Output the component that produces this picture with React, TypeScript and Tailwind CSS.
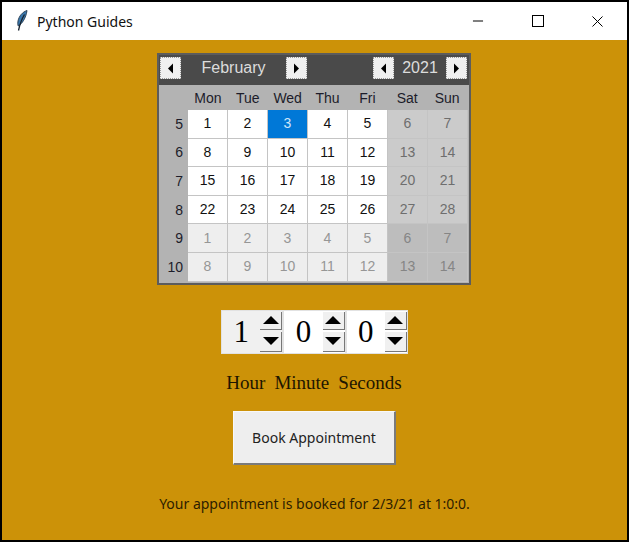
import { Minus, X } from "lucide-react";

const arial = "font-['Liberation_Sans',Arial,sans-serif]";
const serif = "font-['Liberation_Serif','Times_New_Roman',serif]";
const ui = "font-['Noto_Sans','Open_Sans',sans-serif]";

const dayNames = ["Mon", "Tue", "Wed", "Thu", "Fri", "Sat", "Sun"];

const weeks = [
  { n: 5, days: [1, 2, 3, 4, 5, 6, 7] },
  { n: 6, days: [8, 9, 10, 11, 12, 13, 14] },
  { n: 7, days: [15, 16, 17, 18, 19, 20, 21] },
  { n: 8, days: [22, 23, 24, 25, 26, 27, 28] },
  { n: 9, days: [1, 2, 3, 4, 5, 6, 7] },
  { n: 10, days: [8, 9, 10, 11, 12, 13, 14] },
];

const ArrowButton = ({ dir }: { dir: "left" | "right" }) => (
  <div className="flex h-[22px] w-[21px] items-center justify-center border border-dotted border-[#9a9a9a] bg-[#f0f0f0]">
    <svg width="7" height="11" viewBox="0 0 7 11">
      <path d={dir === "left" ? "M6 0.5V10.5L1 5.5Z" : "M1 0.5V10.5L6 5.5Z"} fill="#000" />
    </svg>
  </div>
);

const Spinner = ({ value, dim }: { value: string; dim?: boolean }) => (
  <div className={`flex h-[44px] w-[62.33px] items-center border border-[#e2e2e2] ${dim ? "bg-[#f0f0f0]" : "bg-white"}`}>
    <span className={`${serif} flex-1 text-center text-[31px] leading-none text-black`}>{value}</span>
    <div className="flex w-[22px] flex-col gap-[2px]">
      <div className="flex h-[18px] items-center justify-center border-b border-r border-[#777] bg-[#f0f0f0]">
        <svg width="16" height="8" viewBox="0 0 16 8"><path d="M8 0L16 8H0Z" fill="#000" /></svg>
      </div>
      <div className="flex h-[20px] items-center justify-center border-b border-r border-[#777] bg-[#f0f0f0]">
        <svg width="16" height="8" viewBox="0 0 16 8"><path d="M0 0H16L8 8Z" fill="#000" /></svg>
      </div>
    </div>
  </div>
);

const dayCellClass = (week: number, col: number, day: number) => {
  if (week === 0 && day === 3) return "bg-[#0078d7] text-[#cfe6fa]";
  const weekend = col >= 5;
  if (week >= 4) return weekend ? "bg-[#bdbdbd] text-[#858585]" : "bg-[#eeeeee] text-[#969696]";
  return weekend ? "bg-[#cbcbcb] text-[#6e6e6e]" : "bg-white text-[#111]";
};

const Calendar = () => (
  <div className={`${arial} mr-[1px] w-[314px] border-[2px] border-[#5c5c5c] bg-[#b3b3b3] text-[14px]`}>
    <div className="flex h-[30px] items-center bg-[#4a4a4a] pb-[4px] pl-[1px] pr-[2px] text-[#dcdcdc]">
      <ArrowButton dir="left" />
      <span className="w-[105px] text-center text-[16px]">February</span>
      <ArrowButton dir="right" />
      <div className="flex-1" />
      <ArrowButton dir="left" />
      <span className="w-[52px] text-center text-[16px]">2021</span>
      <ArrowButton dir="right" />
    </div>
    <div className="flex h-[25px] items-center pl-[29px] pr-[2px] text-[#1c1c2a]">
      {dayNames.map((d) => (
        <span key={d} className="w-[40px] pt-[1px] text-center">{d}</span>
      ))}
    </div>
    <div className="grid grid-cols-[29px_repeat(7,40px)] grid-rows-[repeat(6,28.6px)] pb-[1px] pr-[2px]">
      {weeks.map((w, i) => (
        <div key={w.n} className="contents">
          <span className="flex items-center justify-end pr-[5px] text-[#1c1c2a]">{w.n}</span>
          {w.days.map((d, c) => (
            <span
              key={c}
              className={`flex items-center justify-center border-b border-r border-[#c4c4c4] ${dayCellClass(i, c, d)}`}
            >
              {d}
            </span>
          ))}
        </div>
      ))}
    </div>
  </div>
);

export default function App() {
  return (
    <div className="flex h-[542px] w-[629px] flex-col border-2 border-black bg-[#cc9208]">
      <div className={`${ui} flex h-[38px] items-center bg-white text-[14px] text-[#111]`}>
        <svg className="ml-[14px]" width="12" height="22" viewBox="0 0 12 22">
          <path d="M11 .5C6.500 2 3 6 2 11c-.4 2-.3 3.500.2 5C6 14 10 8 11 .5Z" fill="#3a78ad" stroke="#22384d" strokeWidth=".9" />
          <path d="M8.500 4.500C6 8.500 4 13.500 2.500 20.500" fill="none" stroke="#15202c" strokeWidth="1.300" />
        </svg>
        <span className="ml-[9px]">Python Guides</span>
        <div className="ml-auto flex items-center text-black">
          <div className="flex w-[60px] justify-center"><Minus size={16} strokeWidth={1} absoluteStrokeWidth /></div>
          <div className="flex w-[59px] justify-center"><div className="h-[12px] w-[12px] border border-black" /></div>
          <div className="flex w-[60px] justify-center"><X size={19} strokeWidth={1} absoluteStrokeWidth /></div>
        </div>
      </div>

      <div className="flex flex-1 flex-col items-center pt-[13px]">
        <Calendar />

        <div className="mt-[25px] flex">
          <Spinner value="1" dim />
          <Spinner value="0" />
          <Spinner value="0" />
        </div>

        <div className={`${serif} mr-[1px] mt-[18px] flex gap-[9px] text-[19px] leading-[22px] text-[#1e1600]`}>
          <span>Hour</span>
          <span>Minute</span>
          <span>Seconds</span>
        </div>

        <button className={`${ui} mt-[17px] h-[54px] w-[163px] border border-b-2 border-r-2 border-b-[#7a7a7a] border-l-[#f8f8f8] border-r-[#7a7a7a] border-t-[#f8f8f8] bg-[#eeeeee] text-[14px] text-[#222]`}>
          Book Appointment
        </button>

        <p className={`${ui} mt-[29px] text-[14px] leading-[20px] text-[#2d1d00]`}>
          Your appointment is booked for 2/3/21 at 1:0:0.
        </p>
      </div>
    </div>
  );
}
